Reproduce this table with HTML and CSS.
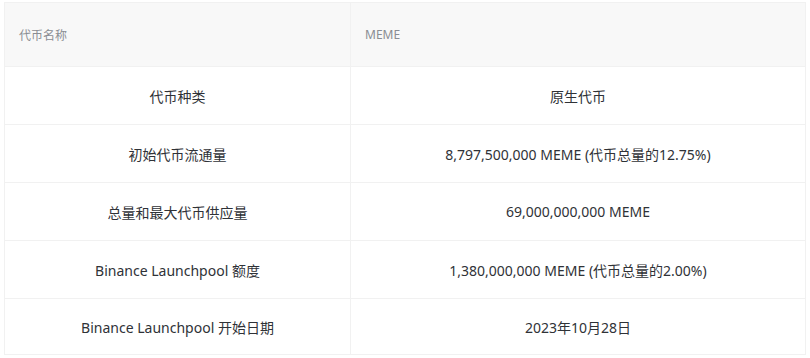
FILE: index.html
```html
<!DOCTYPE html>
<html lang="zh">
<head>
<meta charset="utf-8">
<link rel="stylesheet" href="styles.css">
</head>
<body>
<div class="wrap">
<table class="tbl">
  <colgroup><col class="c1"><col class="c2"></colgroup>
  <thead>
    <tr><th>代币名称</th><th>MEME</th></tr>
  </thead>
  <tbody>
    <tr><td>代币种类</td><td>原生代币</td></tr>
    <tr><td>初始代币流通量</td><td>8,797,500,000 MEME (代币总量的12.75%)</td></tr>
    <tr><td>总量和最大代币供应量</td><td>69,000,000,000 MEME</td></tr>
    <tr><td>Binance Launchpool 额度</td><td>1,380,000,000 MEME (代币总量的2.00%)</td></tr>
    <tr><td>Binance Launchpool 开始日期</td><td>2023年10月28日</td></tr>
  </tbody>
</table>
</div>
</body>
</html>
```
FILE: styles.css
```css
html, body { margin: 0; padding: 0; background: #fff; }
.wrap { padding: 2px 4px 0 4px; }
.tbl {
  width: 802px;
  border-collapse: collapse;
  font-family: "Noto Sans", "Noto Sans CJK SC", sans-serif;
  color: #2f3237;
  table-layout: fixed;
  border: 1px solid #f3f3f3;
}
.c1 { width: 346px; }
.tbl th {
  background: #f8f8f8;
  color: #8a8d93;
  font-size: 12px;
  font-weight: 400;
  text-align: left;
  height: 63px;
  padding: 0 0 0 14px;
  border: 1px solid #f1f1f1;
}
.tbl td {
  font-size: 14px;
  text-align: center;
  height: 57px;
  padding: 0;
  border: 1px solid #f1f1f1;
}
.tbl tbody tr:last-child td { height: 55px; }
```
